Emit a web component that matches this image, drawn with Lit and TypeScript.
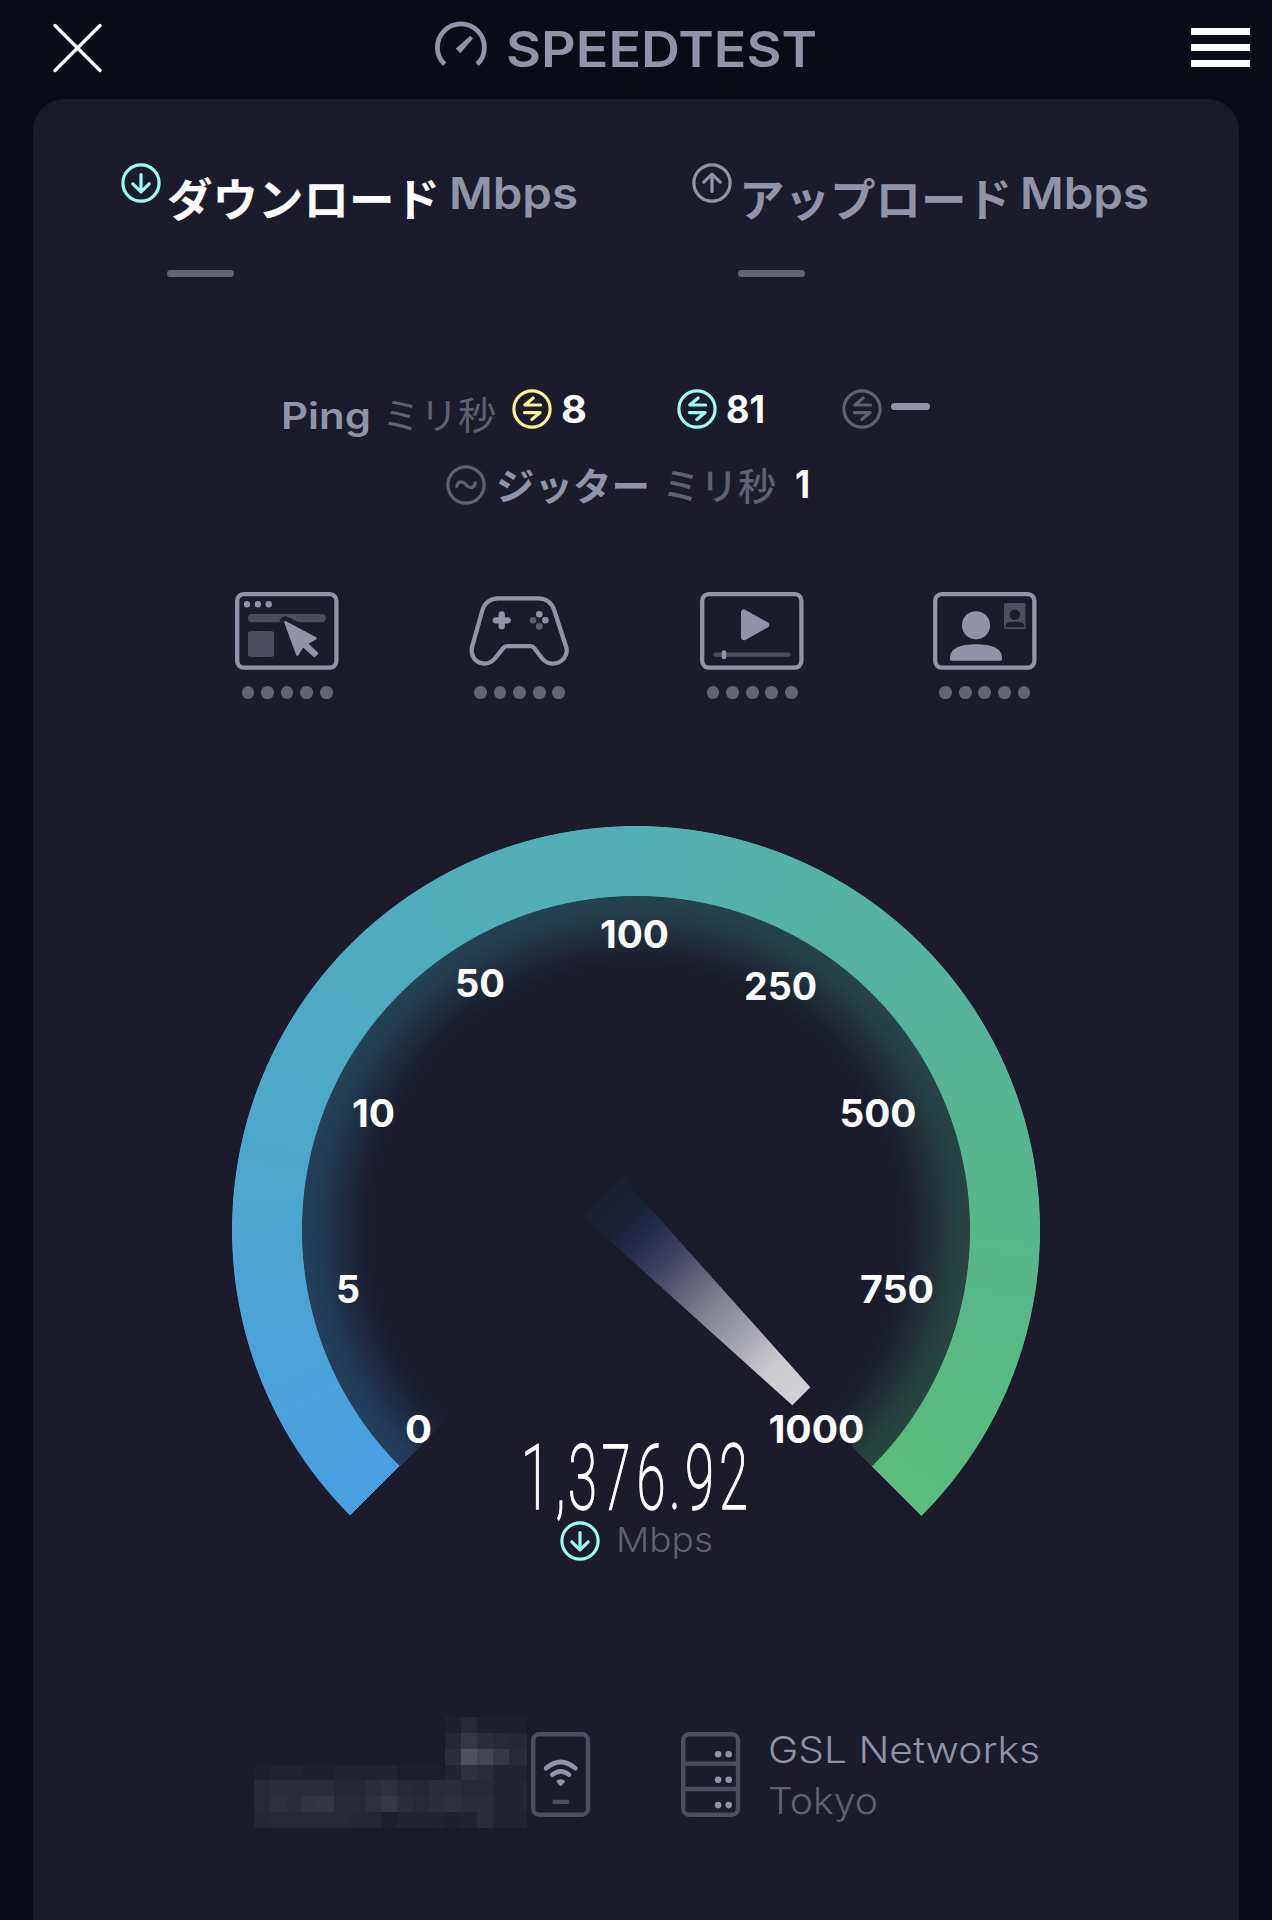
import { LitElement, html, svg, css } from "lit";
import { customElement } from "lit/decorators.js";
import { styleMap } from "lit/directives/style-map.js";

/** One line of text whose box is its cap height; glyphs are fitted to the given width. */
const label = (text: string, w: number, h: number, cls: string, dy = 0) => html`
  <svg class="label ${cls}" width=${w} height=${h}>
    <text x="0" y=${h + dy} textLength=${w} lengthAdjust="spacingAndGlyphs">${text}</text>
  </svg>`;

const round = (cls: string, inner: unknown) => html`
  <svg class="round ${cls}" width="40" height="40" viewBox="0 0 40 40">
    <circle cx="20" cy="20" r="18.1"></circle>${inner}
  </svg>`;

const down = svg`<path d="M20 11.5V28.5M11.8 20.8 20 28.8 28.2 20.8"></path>`;
const up = svg`<path d="M20 28.5V11.5M11.8 19.2 20 11.2 28.2 19.2"></path>`;
const swap = svg`<path d="M28.6 16H12.8L21.2 9M12.4 23.6H28.2L19.8 30.6"></path>`;
const wave = svg`<path d="M10.8 21.5C12 15.5 16.8 15.8 20 19.8S28 24 29.3 17.8"></path>`;
const frame = svg`<rect class="line" x="2.2" y="2.2" width="99.2" height="73.4" rx="6.5"></rect>`;

const browser = svg`${frame}
  <circle cx="12" cy="12.3" r="3.2"></circle><circle cx="22.9" cy="12.3" r="3.2"></circle><circle cx="33.7" cy="12.3" r="3.2"></circle>
  <rect class="dim" x="13" y="22" width="77.7" height="8.3" rx="4.1"></rect>
  <rect class="dim" x="13" y="39" width="26" height="26" rx="3"></rect>
  <path class="halo" d="M50.5 30.3 80.5 46.3 72.3 51.3 82.3 61.3 79.3 64.3 68 54 62.3 62.7Z"></path>
  <path class="cursor" d="M50.5 30.3 80.5 46.3 71.5 51.4 82 61.3 79.4 64 68 53.6 62.3 62.5Z"></path>`;
const gamepad = svg`
  <path class="line" d="M30 6.3H70.7C78 6.3 84.3 11 86.3 18.5L98 54.5C101 63 94 71.6 84.5 71.6 80 71.6 76.5 69.5 74 66.3L66.2 56Q64.8 54.2 62.5 54.2H39Q36.8 54.2 35.3 56L27 66.3C24.2 70 20.8 71.6 16.5 71.6 7.5 71.6 2 64 4.2 54.5L14.3 18.5C16.3 11 22.5 6.3 30 6.3Z"></path>
  <path class="pad" d="M33.7 22.4V34.2M27.8 28.3H39.6"></path>
  <circle cx="71.3" cy="22.3" r="3.3"></circle><circle cx="77.4" cy="28.3" r="3.3"></circle>
  <circle class="mid" cx="65" cy="28.3" r="3.3"></circle><circle class="mid" cx="71.3" cy="34.4" r="3.3"></circle>`;
const video = svg`${frame}
  <path class="play" d="M44 20.5V45.3L66.2 32.8Z"></path>
  <rect class="dim" x="13.3" y="60.4" width="77.4" height="4.4" rx="2.2"></rect>
  <rect x="21.7" y="58.3" width="4.6" height="9" rx="2.3"></rect>`;
const call = svg`${frame}
  <circle cx="43" cy="33.3" r="14.1"></circle>
  <path d="M17 67V65.5C17 56.5 27 52.2 43 52.2S69 56.5 69 65.5V67Q69 68.7 67.3 68.7H18.7Q17 68.7 17 67Z"></path>
  <rect class="dim" x="71" y="11" width="21.6" height="26" rx="1.5"></rect>
  <circle class="cut" cx="81.8" cy="22.7" r="5.2"></circle>
  <path class="cut" d="M72.4 35.2V33.5C73 30.8 76.5 29.8 81.8 29.8S90.6 30.8 91.2 33.5V35.2Z"></path>`;

const phone = svg`
  <rect class="edge" x="2.2" y="2.2" width="54.8" height="80.6" rx="6"></rect>
  <path class="wifi" d="M15 36.3Q29.7 23.7 44.4 36.3M21.3 42.7Q29.7 36.2 38.1 42.7"></path>
  <path class="bulb" d="M26.8 49.5Q29.7 47.7 32.7 49.5L29.7 52.6Z"></path>
  <rect class="slot" x="21.3" y="67.7" width="17" height="4.4" rx="2"></rect>`;
const server = svg`
  <rect class="edge" x="2.2" y="2.2" width="54.8" height="80.6" rx="6"></rect>
  <path class="edge" d="M2 31.7H57M2 57H57"></path>
  ${[22.3, 47.8, 73.1].map((y) => svg`<circle cx="37.1" cy=${y} r="3.3"></circle><circle cx="47.7" cy=${y} r="3.3"></circle>`)}`;

/** Dial captions: text, left edge, width, baseline. */
const TICKS: [string, number, number, number][] = [
  ["0", 173, 27, 617], ["5", 104, 24, 477], ["10", 120, 43, 301], ["50", 223, 50, 171],
  ["100", 368, 69, 122], ["250", 512, 73, 174], ["500", 607.5, 77, 301], ["750", 628, 74, 477],
  ["1000", 536.5, 96, 617],
];

/** Narrow figures of the reading: horizontal squeeze and the pen position of each glyph. */
const SQUEEZE = 0.58;
const PENS = [-1, 33.5, 46, 79.5, 114.5, 147, 163, 197].map((x) => (x / SQUEEZE).toFixed(1)).join(" ");

/** Pixelated operator name: brightness per cell, in percent. */
const MOSAIC = [
  [0, 0, 0, 0, 0, 0, 0, 0, 0, 0, 0, 0, 2, 6, 2, 2, 2, 2],
  [0, 0, 0, 0, 0, 0, 0, 0, 0, 0, 0, 0, 5, 12, 8, 6, 5, 6],
  [0, 0, 0, 0, 0, 0, 0, 0, 0, 0, 0, 0, 8, 24, 18, 12, 6, 7],
  [2, 3, 3, 2, 2, 3, 3, 3, 3, 1, 1, 1, 4, 9, 7, 3, 3, 4],
  [6, 7, 7, 8, 7, 5, 5, 7, 9, 6, 5, 7, 8, 6, 6, 4, 4, 5],
  [6, 9, 8, 10, 11, 6, 6, 9, 12, 8, 6, 8, 9, 7, 7, 4, 4, 5],
  [5, 6, 6, 6, 6, 6, 5, 5, 2, 4, 4, 3, 2, 3, 7, 3, 3, 4],
];

@customElement("app-root")
export class AppRoot extends LitElement {
  static styles = css`
    :host {
      display: block;
      height: 1920px;
      overflow: hidden;
      background: #090b17;
      --card: #1b1b2c;
      --grey: #9193a8;
      --faint: #5f6073;
      --cyan: #98fcf3;
      --yellow: #fbf58f;
      font-family: Inter, "Noto Sans CJK JP", sans-serif;
    }
    svg { display: block; flex: none; overflow: visible; }
    text { font-family: Inter, "Noto Sans CJK JP", sans-serif; }
    header { display: flex; height: 99px; align-items: flex-start; box-sizing: border-box; padding-left: 53px; }
    .close { margin-top: 24px; stroke: #fff; stroke-width: 3.3; stroke-linecap: round; }
    .logo { margin: 22px 0 0 333px; fill: none; stroke: var(--grey); stroke-width: 4.8; }
    .logo .hand { fill: var(--grey); stroke: none; }
    .brand { margin: 30.5px 0 0 19px; font-size: 49px; font-weight: 600; fill: var(--grey); }
    .menu { display: grid; gap: 9px; margin: 28px 0 0 374px; width: 59px; }
    .menu i { height: 7px; background: #fff; }
    main { margin: 0 33px; height: 1821px; background: var(--card); border-radius: 32px 32px 0 0; }
    .metrics { display: grid; grid-template-columns: 571.5px 571.5px; padding: 64px 0 0 87.5px; height: 290px; box-sizing: border-box; }
    .metric { display: grid; grid-template-columns: 40px 281px 127px; align-content: start; }
    .title { margin: 13.5px 0 0 6.5px; font-size: 45.5px; font-weight: 650; fill: #fff; }
    .title.off { fill: var(--grey); font-weight: 600; }
    .unit { margin: 14px 0 0 7px; font-size: 43.5px; font-weight: 580; fill: var(--grey); }
    .dash { width: 67px; height: 7px; border-radius: 4px; background: #626376; }
    .metric .dash { grid-column: 2; margin: 53.5px 0 0 6px; }
    .round { fill: none; stroke-width: 3.2; stroke-linecap: round; stroke-linejoin: round; stroke: var(--faint); }
    .round.cyan { stroke: var(--cyan); }
    .round.yellow { stroke: var(--yellow); }
    .round.grey { stroke: var(--grey); }
    .row { display: flex; align-items: flex-start; }
    .ping { padding-left: 248px; height: 75.5px; }
    .name { margin-top: 13px; font-size: 36.7px; font-weight: 600; fill: var(--grey); }
    .ms { margin: 10.5px 0 0 11px; font-size: 37.5px; font-weight: 370; fill: var(--faint); }
    .value { margin: 5.5px 0 0 9px; font-size: 38px; font-weight: 650; fill: #fff; }
    .ping .round { margin-left: 16px; }
    .ping .round.cyan { margin-left: 90px; }
    .ping .round.third { margin-left: 77px; }
    .ping .dash { width: 39px; height: 7px; margin: 14px 0 0 9px; background: var(--grey); }
    .jitter { padding-left: 413px; height: 127.5px; }
    .jname { margin: 7px 0 0 10px; font-size: 37.5px; font-weight: 650; fill: var(--grey); }
    .jms { margin: 7px 0 0 12px; font-size: 37.5px; font-weight: 550; fill: var(--faint); }
    .jitter .value { margin: 5px 0 0 19px; }
    .uses { display: grid; grid-template-columns: repeat(4, 232.6px); padding-left: 202px; height: 234px; align-items: start; }
    .use { display: grid; gap: 16px; width: 104px; justify-items: center; }
    .use svg { fill: var(--grey); }
    .line { fill: none; stroke: var(--grey); stroke-width: 4.3; }
    .dim { fill: #4c4d5f; }
    .mid { fill: #5f6073; }
    .cut { fill: var(--card); }
    .halo { fill: var(--card); stroke: var(--card); stroke-width: 12; stroke-linejoin: round; }
    .cursor { stroke: var(--grey); stroke-width: 2.5; stroke-linejoin: round; }
    .pad { stroke: var(--grey); stroke-width: 6.3; stroke-linecap: round; }
    .play { stroke: var(--grey); stroke-width: 6; stroke-linejoin: round; }
    .dots { display: flex; gap: 6.9px; }
    .dots i { width: 12.7px; height: 12.7px; border-radius: 50%; background: #626376; }
    .gauge { display: grid; width: 808px; height: 808px; margin: 0 auto -191px; }
    .gauge > * { grid-area: 1 / 1; }
    .face { z-index: 1; }
    .ring, .glow {
      background: conic-gradient(from 225deg, #499fe2 0deg, #4ca6cf 50deg, #50abbd 95deg, #53afb1 135deg, #55b2a2 170deg, #57b58f 215deg, #5abc7d 270deg, transparent 270.08deg);
    }
    .ring { -webkit-mask: radial-gradient(circle, transparent 333.6px, #000 334.4px, #000 403.6px, transparent 404.4px); }
    .glow {
      opacity: 0.34;
      filter: brightness(0.82) saturate(1.15);
      -webkit-mask: radial-gradient(circle, transparent 260px, rgba(0, 0, 0, 0.16) 276px, rgba(0, 0, 0, 0.58) 302px, rgba(0, 0, 0, 0.85) 318px, #000 334px, transparent 334.6px);
    }
    .tick { font-size: 38px; font-weight: 750; fill: #fff; }
    .speed { display: grid; justify-items: start; align-content: start; padding-left: 489px; height: 274px; }
    .reading text { font: 200 91px Roboto, sans-serif; fill: #fff; stroke: #fff; stroke-width: 1.3; }
    .under { display: flex; align-items: flex-start; padding-left: 37.5px; margin-top: 12px; }
    .thin { margin: 6px 0 0 16px; font-size: 34.5px; font-weight: 300; fill: var(--faint); }
    .foot { display: flex; padding-left: 221.3px; align-items: flex-start; }
    .mosaic { display: grid; grid-template-columns: repeat(17, 15.9px) 3px; grid-auto-rows: 15.86px; width: 273.3px; }
    .mosaic i { background: #fff; }
    .device { margin: 15px 0 0 3.5px; fill: var(--grey); }
    .device.host { margin-left: 91px; }
    .edge { fill: none; stroke: #4c4d63; stroke-width: 4.4; }
    .slot { fill: #4c4d63; }
    .wifi { fill: none; stroke: var(--grey); stroke-width: 4.6; stroke-linecap: round; }
    .bulb { stroke: var(--grey); stroke-width: 2.5; stroke-linejoin: round; }
    .place { display: grid; gap: 24.5px; margin: 20px 0 0 28px; }
    .isp { font-size: 36.5px; font-weight: 320; fill: var(--grey); }
    .city { font-size: 36.5px; font-weight: 320; fill: var(--faint); }
  `;

  private use(art: unknown) {
    return html`<div class="use">
      <svg width="104" height="78" viewBox="0 0 104 78">${art}</svg>
      <div class="dots">${[0, 1, 2, 3, 4].map(() => html`<i></i>`)}</div>
    </div>`;
  }

  render() {
    return html`
      <header>
        <svg class="close" width="49" height="48"><path d="M2 1.5 47 46.5M47 1.5 2 46.5"></path></svg>
        <svg class="logo" width="52" height="45" viewBox="0 0 52 45">
          <path d="M9.6 42.3A23.5 23.5 0 1 1 42.2 42.3"></path>
          <path class="hand" d="M20.8 26.4 35.3 13.8 38 16.4 25.3 31.2Z"></path>
        </svg>
        ${label("SPEEDTEST", 311, 36, "brand")}
        <div class="menu"><i></i><i></i><i></i></div>
      </header>
      <main>
        <section class="metrics">
          <div class="metric">
            ${round("cyan", down)} ${label("ダウンロード", 273, 40, "title")} ${label("Mbps", 129, 31.5, "unit")}
            <div class="dash"></div>
          </div>
          <div class="metric">
            ${round("grey", up)} ${label("アップロード", 273, 40, "title off")} ${label("Mbps", 129, 31.5, "unit")}
            <div class="dash"></div>
          </div>
        </section>
        <section class="row ping">
          ${label("Ping", 90, 26.5, "name")} ${label("ミリ秒", 114, 27, "ms", 2)}
          ${round("yellow", swap)} ${label("8", 26, 27.5, "value")}
          ${round("cyan", swap)} ${label("81", 39, 27.5, "value")}
          ${round("third", swap)}<div class="dash"></div>
        </section>
        <section class="row jitter">
          ${round("", wave)} ${label("ジッター", 154, 27, "jname", 1)} ${label("ミリ秒", 114, 27, "jms", 1)}
          ${label("1", 15, 27.5, "value")}
        </section>
        <section class="uses">${[browser, gamepad, video, call].map((a) => this.use(a))}</section>
        <section class="gauge">
          <div class="glow"></div>
          <div class="ring"></div>
          <svg class="face" width="808" height="808" viewBox="0 0 808 808">
            <defs>
              <linearGradient id="needle" gradientUnits="userSpaceOnUse" x1="371" y1="371.3" x2="569.3" y2="570.3">
                <stop offset="0" stop-color="#1b2031"></stop>
                <stop offset="0.12" stop-color="#1c2236"></stop>
                <stop offset="0.2" stop-color="#242a4a"></stop>
                <stop offset="0.32" stop-color="#3e405f"></stop>
                <stop offset="0.5" stop-color="#737486"></stop>
                <stop offset="0.72" stop-color="#a8a8b2"></stop>
                <stop offset="0.86" stop-color="#cdccd1"></stop>
                <stop offset="1" stop-color="#d2d0d5"></stop>
              </linearGradient>
            </defs>
            <path fill="url(#needle)" d="M390.3 351.3 351.7 391.2 560.3 579.3 578.3 561.3Z"></path>
            ${TICKS.map(([t, x, w, y]) => svg`<text class="tick" x=${x} y=${y} textLength=${w} lengthAdjust="spacingAndGlyphs">${t}</text>`)}
          </svg>
        </section>
        <section class="speed">
          <svg class="reading" width="229" height="66">
            <text transform="scale(${SQUEEZE} 1)" x=${PENS} y="66">1,376.92</text>
          </svg>
          <div class="under">${round("cyan", down)} ${label("Mbps", 97, 24.5, "thin")}</div>
        </section>
        <section class="foot">
          <div class="mosaic">${MOSAIC.flat().map((v) => html`<i style=${styleMap({ opacity: String(v / 100) })}></i>`)}</div>
          <svg class="device" width="59" height="85">${phone}</svg>
          <svg class="device host" width="59" height="85">${server}</svg>
          <div class="place">${label("GSL Networks", 272, 26, "isp")} ${label("Tokyo", 110, 26, "city")}</div>
        </section>
      </main>`;
  }
}
